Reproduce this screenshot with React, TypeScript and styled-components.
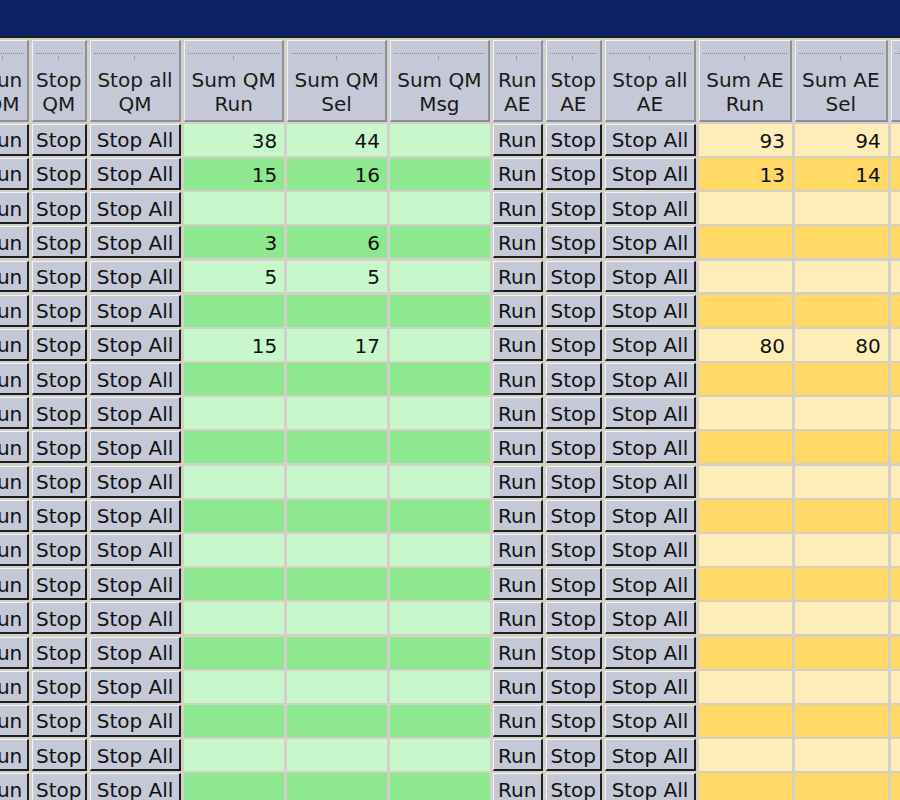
import React from "react";
import styled, { createGlobalStyle, css } from "styled-components";

const GlobalStyle = createGlobalStyle`
  html, body {
    margin: 0;
    padding: 0;
    background: #d4d0c8;
    overflow: hidden;
  }
  body {
    font-family: "DejaVu Sans", "Liberation Sans", sans-serif;
  }
`;

type Kind = "button" | "green" | "yellow";

interface Column {
  title: [string, string];
  width: number;
  kind: Kind;
  action?: string;
  field?: "qmRun" | "qmSel" | "aeRun" | "aeSel";
}

interface Row {
  qmRun?: number;
  qmSel?: number;
  aeRun?: number;
  aeSel?: number;
}

const columns: Column[] = [
  { title: ["Run", "QM"], width: 50, kind: "button", action: "Run" },
  { title: ["Stop", "QM"], width: 55.4, kind: "button", action: "Stop" },
  { title: ["Stop all", "QM"], width: 91, kind: "button", action: "Stop All" },
  { title: ["Sum QM", "Run"], width: 100.3, kind: "green", field: "qmRun" },
  { title: ["Sum QM", "Sel"], width: 99.7, kind: "green", field: "qmSel" },
  { title: ["Sum QM", "Msg"], width: 99.7, kind: "green" },
  { title: ["Run", "AE"], width: 50, kind: "button", action: "Run" },
  { title: ["Stop", "AE"], width: 56.3, kind: "button", action: "Stop" },
  { title: ["Stop all", "AE"], width: 91, kind: "button", action: "Stop All" },
  { title: ["Sum AE", "Run"], width: 93, kind: "yellow", field: "aeRun" },
  { title: ["Sum AE", "Sel"], width: 92.7, kind: "yellow", field: "aeSel" },
  { title: ["Sum AE", "Msg"], width: 100, kind: "yellow" },
];

const filled: Record<number, Row> = {
  0: { qmRun: 38, qmSel: 44, aeRun: 93, aeSel: 94 },
  1: { qmRun: 15, qmSel: 16, aeRun: 13, aeSel: 14 },
  3: { qmRun: 3, qmSel: 6 },
  4: { qmRun: 5, qmSel: 5 },
  6: { qmRun: 15, qmSel: 17, aeRun: 80, aeSel: 80 },
};

const rows: Row[] = Array.from({ length: 22 }, (_, i) => filled[i] || {});

const palette = {
  green: ["#c8f7cc", "#8ee890"],
  yellow: ["#ffedb9", "#ffd866"],
};

const TitleBar = styled.div`
  height: 36px;
  background: #0b2365;
  border-bottom: 2px solid #1c1c22;
`;

const Viewport = styled.div`
  height: 762px;
  overflow: hidden;
  padding-top: 1.5px;
  box-sizing: border-box;
`;

const Grid = styled.div<{ $cols: string }>`
  display: grid;
  grid-template-columns: ${(p) => p.$cols};
  grid-template-rows: 82px;
  grid-auto-rows: 31.9px;
  column-gap: 3px;
  row-gap: 2.3px;
  width: max-content;
  margin-left: -21.4px;
  font-size: 20px;
  color: #111;
`;

const HeaderCell = styled.div`
  display: flex;
  flex-direction: column;
  align-items: stretch;
  box-sizing: border-box;
  padding-top: 12px;
  background: #c5c9d7;
  border-top: 1px solid #eef0f6;
  border-left: 1px solid #eef0f6;
  border-right: 2px solid #8b8e9b;
  border-bottom: 2px solid #8b8e9b;
  color: #1a1a1a;
`;

const SortHandle = styled.div`
  position: relative;
  height: 14px;
  margin: 0 3px;
  border-top: 1px dotted #8a8a8a;

  &::after {
    content: "";
    position: absolute;
    left: 50%;
    top: 2px;
    width: 1px;
    height: 4px;
    margin-left: -1px;
    border-left: 1px dotted #8a8a8a;
  }
`;

const Label = styled.div`
  text-align: center;
  line-height: 24px;
  white-space: nowrap;
`;

const ActionButton = styled.button`
  display: flex;
  align-items: center;
  justify-content: center;
  box-sizing: border-box;
  margin: 0;
  padding: 2px 0 0;
  font: inherit;
  color: #111;
  white-space: nowrap;
  background: #c5c9d7;
  border-style: solid;
  border-width: 1px 2px 2px 1px;
  border-color: #f2f4f9 #1e1e1e #1e1e1e #f2f4f9;
  overflow: hidden;
`;

const ValueCell = styled.div<{ $kind: "green" | "yellow"; $odd: boolean }>`
  display: flex;
  align-items: center;
  justify-content: flex-end;
  padding: 2px 7px 0 0;
  ${(p) => css`
    background: ${palette[p.$kind][p.$odd ? 1 : 0]};
  `}
`;

export default function App() {
  const template = columns.map((c) => `${c.width}px`).join(" ");
  return (
    <>
      <GlobalStyle />
      <TitleBar />
      <Viewport>
        <Grid $cols={template}>
          {columns.map((c, i) => (
            <HeaderCell key={`h${i}`}>
              <SortHandle />
              <Label>{c.title[0]}</Label>
              <Label>{c.title[1]}</Label>
            </HeaderCell>
          ))}
          {rows.map((row, r) =>
            columns.map((c, i) =>
              c.kind === "button" ? (
                <ActionButton key={`${r}-${i}`}>{c.action}</ActionButton>
              ) : (
                <ValueCell key={`${r}-${i}`} $kind={c.kind} $odd={r % 2 === 1}>
                  {c.field ? row[c.field] : null}
                </ValueCell>
              )
            )
          )}
        </Grid>
      </Viewport>
    </>
  );
}
